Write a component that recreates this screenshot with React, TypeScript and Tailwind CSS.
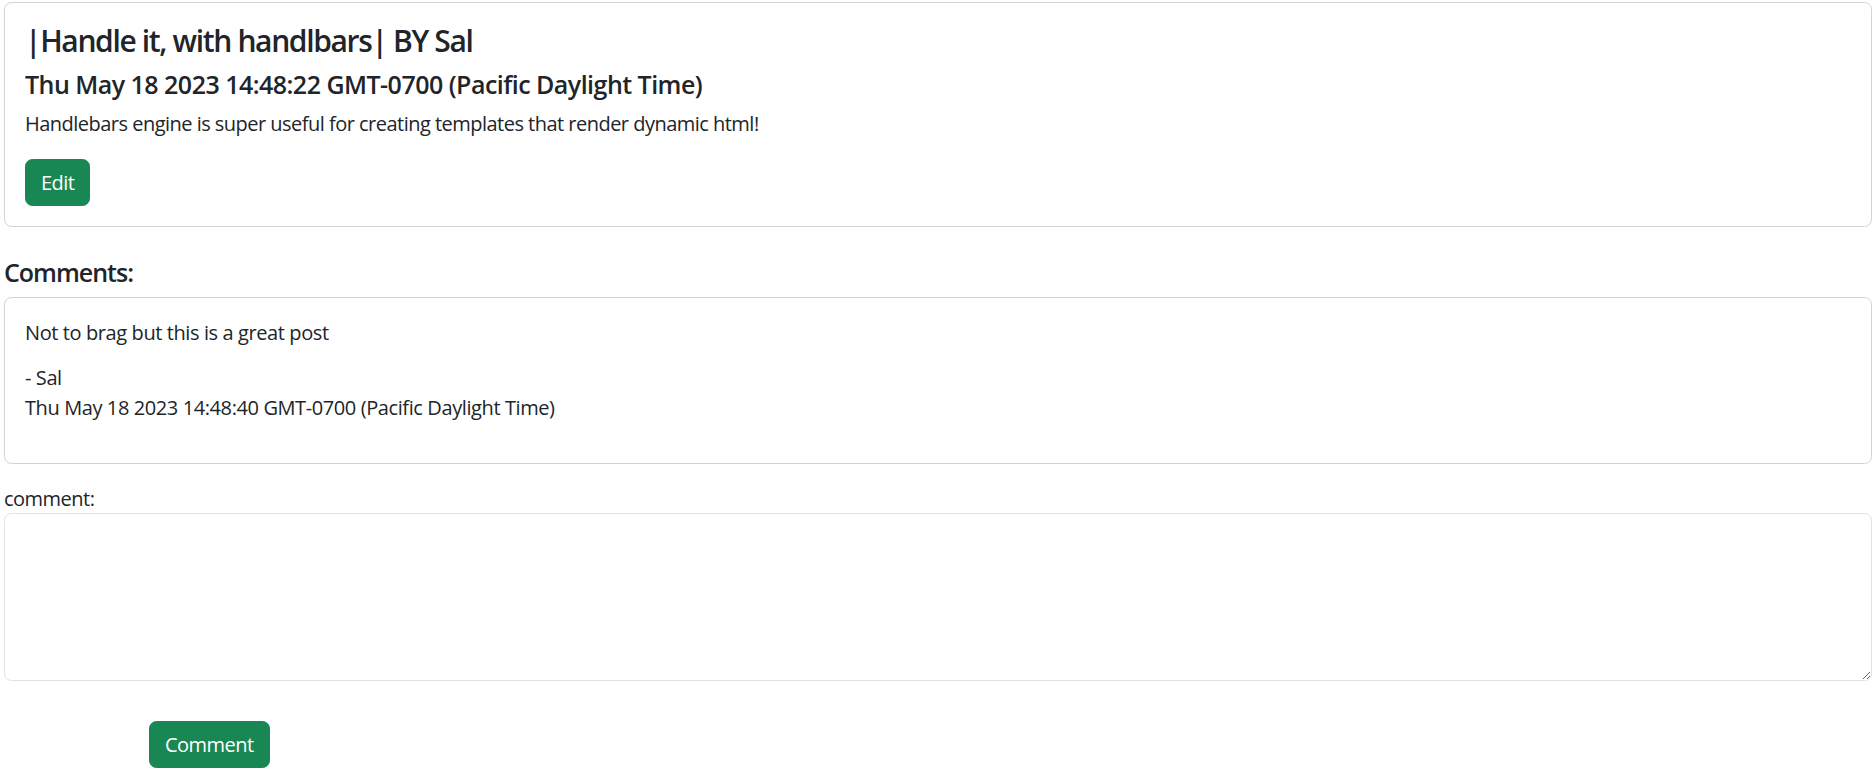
export default function App() {
  return (
    <div className="min-h-screen bg-white px-1 pt-0.5 text-[#212529] font-['Open_Sans','Noto_Sans',sans-serif] text-[20px] leading-[30px] tracking-[-0.026em]">
      {/* post */}
      <div className="rounded-[7.5px] border border-[#d3d3d4] p-5">
        <h4 className="mb-2.5 text-[30px] leading-[36px] font-semibold tracking-[-0.045em]">|Handle it, with handlbars| BY Sal</h4>
        <h5 className="mb-2.5 text-[25px] leading-[30px] font-semibold tracking-[-0.021em]">Thu May 18 2023 14:48:22 GMT-0700 (Pacific Daylight Time)</h5>
        <p className="mb-5">Handlebars engine is super useful for creating templates that render dynamic html!</p>
        <button className="rounded-[7.5px] border border-[#198754] bg-[#198754] px-[15px] py-[7.5px] text-white">Edit</button>
      </div>

      <h5 className="mt-[30px] mb-2.5 text-[25px] leading-[30px] font-semibold tracking-[-0.04em]">Comments:</h5>

      <div className="rounded-[7.5px] border border-[#d3d3d4] p-5 tracking-[-0.02em]">
        <p className="mb-[15px]">Not to brag but this is a great post</p>
        <p className="mb-5">
          - Sal
          <br />
          Thu May 18 2023 14:48:40 GMT-0700 (Pacific Daylight Time)
        </p>
      </div>

      <form className="mt-5">
        <label className="block leading-[29px]">comment:</label>
        <textarea className="block h-[168px] w-full rounded-[7.5px] border border-[#dee2e6] outline-none" />
        <button type="button" className="mt-10 ml-[145px] rounded-[7.5px] border border-[#198754] bg-[#198754] px-[15px] py-[7.5px] text-white">
          Comment
        </button>
      </form>
    </div>
  )
}
